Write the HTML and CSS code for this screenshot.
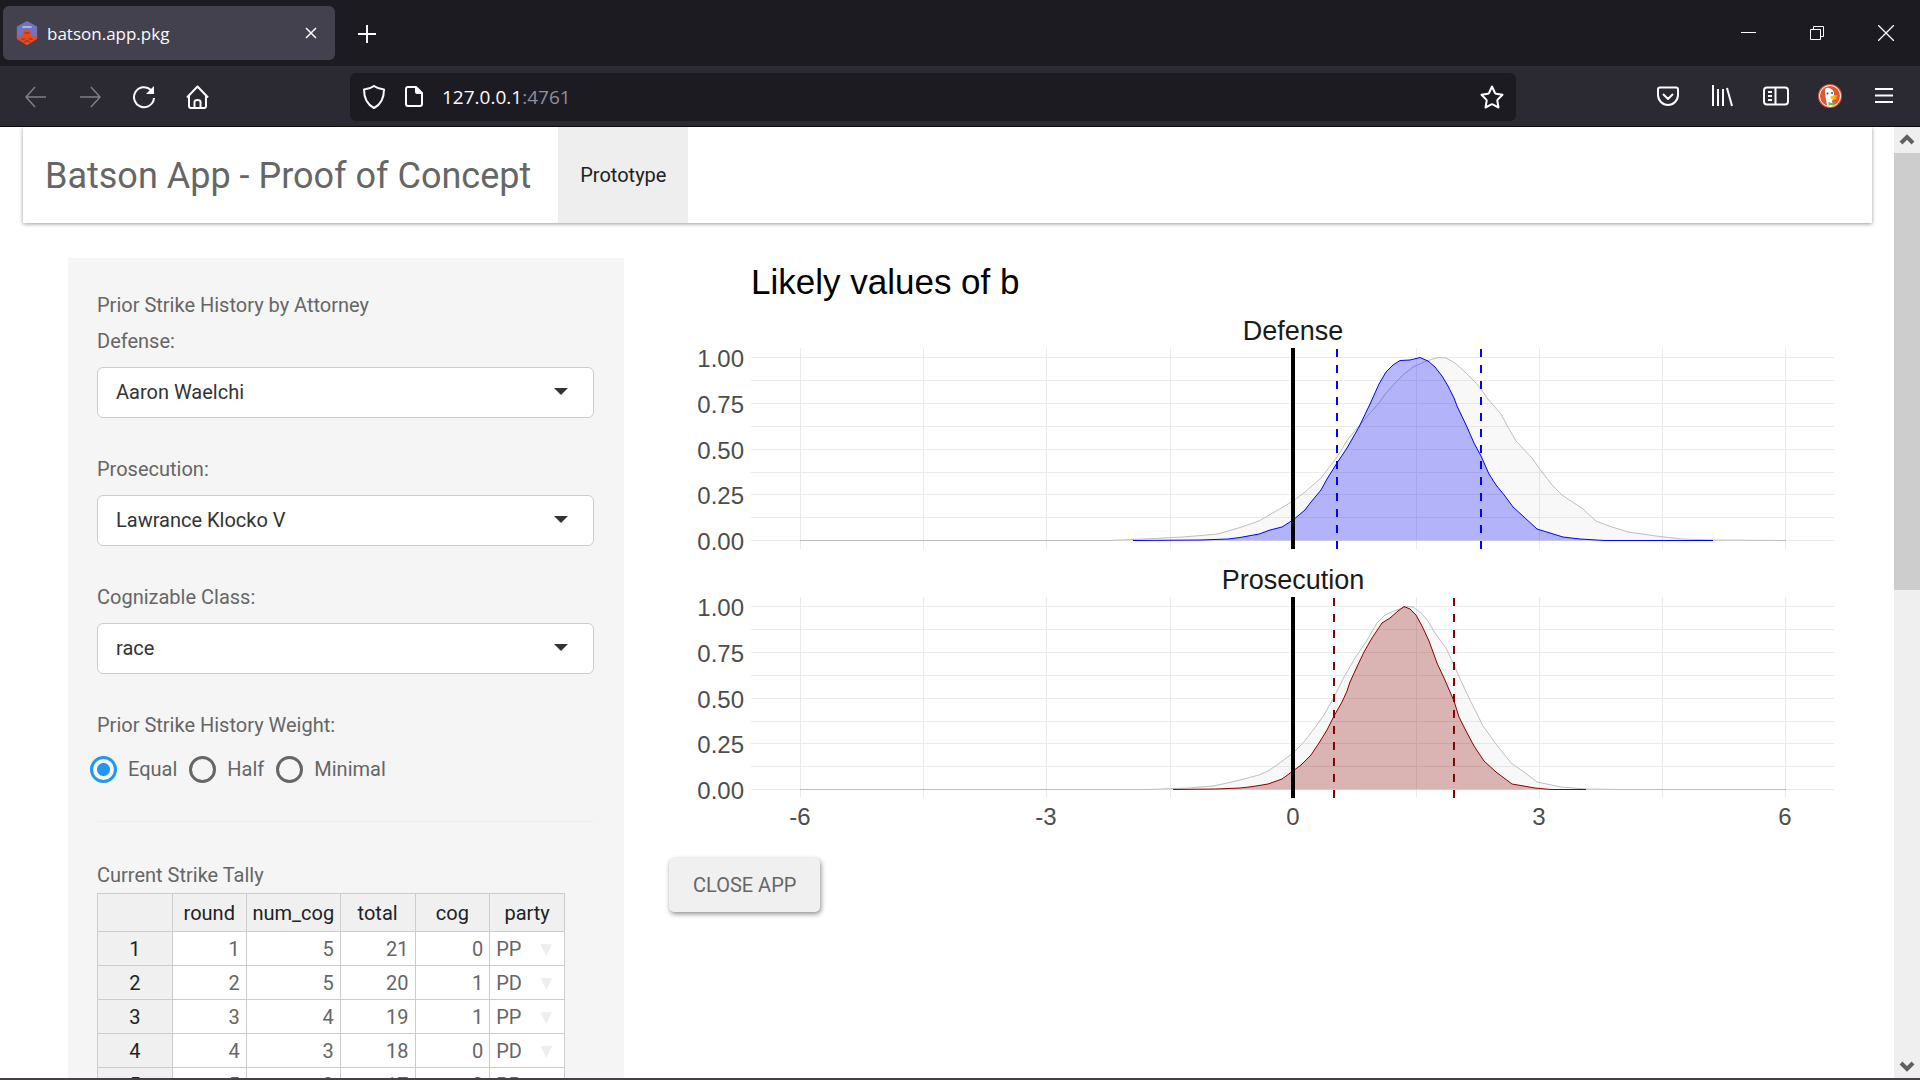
FILE: index.html
```html
<!DOCTYPE html>
<html lang="en">
<head>
<meta charset="utf-8">
<title>batson.app.pkg</title>
<link rel="stylesheet" href="styles.css">
</head>
<body>
<header class="browser">
  <div class="tabstrip">
    <div class="tab">
      <svg class="favicon" viewBox="0 0 24 26" aria-hidden="true">
        <path d="M12 0 23 6v13l-11 7L1 19V6z" fill="#6f74c0"/>
        <path d="M7 6.500h10" stroke="#b4b7e6" stroke-width="2"/>
        <path d="M1 16l4 1 3-1V13Q8 9 12 9t4 4v3l3 1 4-1v3.500L12 26 1 19.500z" fill="#ea4a1c"/>
        <path d="M9.500 13h5M6 20l4-1M14 19l4 1M9 23l3-2 3 2" stroke="#a83a20" fill="none"/>
      </svg>
      <span class="tab-title">batson.app.pkg</span>
      <button class="icon-btn tab-close" aria-label="Close tab">
        <svg width="12" height="12" viewBox="0 0 12 12"><path d="M1 1l10 10M11 1 1 11"/></svg>
      </button>
    </div>
    <button class="icon-btn new-tab" aria-label="New tab">
      <svg width="18" height="18" viewBox="0 0 18 18"><path d="M9 0v18M0 9h18" stroke-width="2"/></svg>
    </button>
    <div class="window-controls">
      <button class="icon-btn" aria-label="Minimize"><svg width="16" height="16" viewBox="0 0 16 16"><path d="M1 7.500h15" stroke-width="1"/></svg></button>
      <button class="icon-btn" aria-label="Restore"><svg width="16" height="16" viewBox="0 0 16 16"><path d="M1.500 4.500h10v10h-10zM4.500 4.500v-3h10v10h-3" stroke-width="1"/></svg></button>
      <button class="icon-btn" aria-label="Close"><svg width="16" height="16" viewBox="0 0 16 16"><path d="M0 0l16 16M16 0 0 16" stroke-width="1.300"/></svg></button>
    </div>
  </div>
  <div class="toolbar">
    <nav class="nav-buttons" aria-label="Browser navigation">
      <button class="icon-btn dim" aria-label="Back"><svg width="24" height="24" viewBox="0 0 24 24"><path d="M22 12H2M11 2 2 12l9 10"/></svg></button>
      <button class="icon-btn dim" aria-label="Forward"><svg width="24" height="24" viewBox="0 0 24 24"><path d="M2 12h20M13 2l9 10-9 10"/></svg></button>
      <button class="icon-btn" aria-label="Reload"><svg width="24" height="24" viewBox="0 0 24 24"><path d="M22 13a10 10 0 1 1-3-8" stroke-width="2"/><path d="M22 1v8h-8z" fill="#fbfbfe" stroke="none"/></svg></button>
      <button class="icon-btn" aria-label="Home"><svg width="24" height="24" viewBox="0 0 24 24"><path d="M1 12.500 11.500 1.500 22 12.500M3 10.500V21q0 2 2 2h13q2 0 2-2V10.500M8.500 23v-6q0-2 3-2t3 2v6" stroke-width="2"/></svg></button>
    </nav>
    <div class="urlbar">
      <svg width="24" height="24" viewBox="0 0 24 24" aria-hidden="true"><path d="M12 1Q16 4 22 4.500 22 18 12 23 2 18 2 4.500 8 4 12 1z" stroke-width="2"/></svg>
      <svg width="20" height="24" viewBox="0 0 20 24" aria-hidden="true"><path d="M12 2H4Q2 2 2 4v15q0 2 2 2h12q2 0 2-2V8z" stroke-width="2"/><path d="M11 1l8 8h-6q-2 0-2-2z" fill="#fbfbfe" stroke="none"/></svg>
      <span class="url">127.0.0.1<span class="port">:4761</span></span>
      <button class="icon-btn star" aria-label="Bookmark this page"><svg width="24" height="24" viewBox="0 0 24 24"><path d="M12 1.500l3 6.500q.3.600 1 .700l6.500 1-4.800 4.900q-.5.500-.4 1.200l1.200 6.700-5.900-3.100q-.6-.300-1.200 0L5.500 22.500l1.200-6.700q.1-.700-.4-1.200L1.500 9.700l6.500-1q.7-.1 1-.700z" stroke-width="2"/></svg></button>
    </div>
    <div class="tool-icons">
      <button class="icon-btn" aria-label="Save to Pocket"><svg width="24" height="24" viewBox="0 0 24 24"><path d="M4 3.500h16q2 0 2 2V11a10 10 0 0 1-20 0V5.500q0-2 2-2zM7 10l5 5 5-5" stroke-width="2"/></svg></button>
      <button class="icon-btn" aria-label="Library"><svg width="24" height="24" viewBox="0 0 24 24"><path d="M3 1v21M8 5v17M13 5v17M17 4l5 18" stroke-width="2"/></svg></button>
      <button class="icon-btn" aria-label="Sidebars"><svg width="26" height="24" viewBox="0 0 26 24"><path d="M4 3.500h18q3 0 3 3v11q0 3-3 3H4q-3 0-3-3v-11q0-3 3-3zM12.500 4v16M5 8h4M5 12h4M5 16h4" stroke-width="2"/></svg></button>
      <button class="icon-btn" aria-label="DuckDuckGo">
        <svg width="24" height="24" viewBox="0 0 24 24"><g stroke="none"><circle cx="12" cy="12" r="12" fill="#de5833"/><circle cx="12" cy="12" r="10.500" fill="none" stroke="#fff" stroke-width="1"/><path d="M7 5q2-2 4-1 4 1 5 5v5l-2 3 1 4.500q-4 1-6 0Q8 15 7 10z" fill="#fff"/><path d="M12.500 12.500q4-2 7.500-.500-2 1-4 1 2 1 3.500.500-2 3-6.500 1.500z" fill="#fdc20a"/><path d="M10.500 18l3 1 3-1v3.500l-3-.500-3 .500z" fill="#65bc46"/><circle cx="9.500" cy="9.500" r="1" fill="#2d4f8e"/><circle cx="14" cy="9" r="1" fill="#2d4f8e"/></g></svg>
      </button>
      <button class="icon-btn" aria-label="Open menu"><svg width="24" height="24" viewBox="0 0 24 24"><path d="M3 5h18M3 11.500h18M3 18h18" stroke-width="2"/></svg></button>
    </div>
  </div>
</header>

<div class="viewport">
  <div class="page">
    <nav class="navbar">
      <span class="brand">Batson App - Proof of Concept</span>
      <a class="nav-tab" href="#prototype">Prototype</a>
    </nav>
    <main class="layout" id="prototype">
      <form class="sidebar">
        <p class="text">Prior Strike History by Attorney</p>
        <div class="field">
          <label for="defense">Defense:</label>
          <div class="select"><select id="defense"><option>Aaron Waelchi</option></select></div>
        </div>
        <div class="field">
          <label for="prosecution">Prosecution:</label>
          <div class="select"><select id="prosecution"><option>Lawrance Klocko V</option></select></div>
        </div>
        <div class="field">
          <label for="class">Cognizable Class:</label>
          <div class="select"><select id="class"><option>race</option></select></div>
        </div>
        <div class="field" role="radiogroup" aria-labelledby="weight-label">
          <p class="text" id="weight-label">Prior Strike History Weight:</p>
          <div class="radios">
            <label><input type="radio" name="weight" checked>Equal</label>
            <label><input type="radio" name="weight">Half</label>
            <label><input type="radio" name="weight">Minimal</label>
          </div>
        </div>
        <hr>
        <p class="text" id="tally-label">Current Strike Tally</p>
        <table class="tally" aria-labelledby="tally-label">
          <colgroup><col><col class="narrow"><col class="wide"><col><col><col></colgroup>
          <thead>
            <tr><th></th><th>round</th><th>num_cog</th><th>total</th><th>cog</th><th>party</th></tr>
          </thead>
          <tbody>
            <tr><th>1</th><td>1</td><td>5</td><td>21</td><td>0</td><td class="party">PP<span class="caret">▼</span></td></tr>
            <tr><th>2</th><td>2</td><td>5</td><td>20</td><td>1</td><td class="party">PD<span class="caret">▼</span></td></tr>
            <tr><th>3</th><td>3</td><td>4</td><td>19</td><td>1</td><td class="party">PP<span class="caret">▼</span></td></tr>
            <tr><th>4</th><td>4</td><td>3</td><td>18</td><td>0</td><td class="party">PD<span class="caret">▼</span></td></tr>
            <tr><th>5</th><td>5</td><td>3</td><td>17</td><td>0</td><td class="party">PP<span class="caret">▼</span></td></tr>
          </tbody>
        </table>
      </form>

      <section class="results">
        <svg class="plot" viewBox="0 0 1173 585" role="img" aria-label="Likely values of b">
          <defs>
            <g id="grid">
              <path d="M82 99.500H1165M82 122.500H1165M82 145.500H1165M82 168.500H1165M82 191.500H1165M82 214.500H1165M82 236.500H1165M82 259.500H1165M82 282.500H1165M131.500 90V291M254.500 90V291M377.500 90V291M501.500 90V291M624.500 90V291M747.500 90V291M870.500 90V291M993.500 90V291M1116.500 90V291"/>
            </g>
          </defs>
          <text class="plot-title" x="82" y="36">Likely values of b</text>

          <g>
            <text class="strip" x="624" y="82">Defense</text>
            <g class="axis-y">
              <text x="75" y="109">1.00</text><text x="75" y="155">0.75</text><text x="75" y="201">0.50</text><text x="75" y="246">0.25</text><text x="75" y="292">0.00</text>
            </g>
            <use href="#grid" class="grid"/>
            <path class="prior" d="M131 282.500H440L464 281.500 495 280 514 279 532 277.500 549 276 559 273 571 269.500 590 263 614 249 624 243 636 234 652 220 668 199 679 181 690 168 701 155 710 145 717 135 727 124 735 116 744 109 755 104 764 101 770 99.500 777 100 786 105 796 114 807 125 812 131 818 140 832 156 840 171 847 183 863 200 870 210 883 227 893 237 914 251 927 263 940 268 959 274 987 278 1013 281 1044 282 1117 282.500"/>
            <path class="defense" d="M464 282.500L531 282 559 281 571 279.500 590 276 601 272 613 269 624 262 636 252 642 244 652 232 658 221 668 205 678 190 690 169 701 146 710 126 717 114 724 107 731 102.500 741 102 751 99.500 759 103 766 109 773 118 779 128 785 140 788 148 798 169 805 185 812 198 820 216 827 227 836 238 844 249 855 259 868 271 881 275 894 279 911 281 936 282.500H1044"/>
            <path class="zero" d="M624 90V291"/>
            <path class="bound defense-bound" d="M668 291V90M812 291V90"/>
          </g>

          <g transform="translate(0 249)">
            <text class="strip" x="624" y="82">Prosecution</text>
            <g class="axis-y">
              <text x="75" y="109">1.00</text><text x="75" y="155">0.75</text><text x="75" y="201">0.50</text><text x="75" y="246">0.25</text><text x="75" y="292">0.00</text>
            </g>
            <use href="#grid" class="grid"/>
            <path class="prior" d="M131 282.500H480L504 281.500 520 281 544 279 549 278 563 275 571 273 590 268 599 264 608 258 624 246 634 236 645 222 655 208 665 190 675 170 686 151 697 135 708 116 716 108 725 104 738 99.500 744 100 752 106 759 114 766 126 777 141 785 158 792 174 801 193 814 219 827 237 842 256 855 265 868 275 892 280 917 282 950 282.500H1117"/>
            <path class="prosecution" d="M504 282.500L547 282 571 281 584 279.500 599 277 613 272 624 264 632 258 642 248 650 236 658 223 665 209 673 195 678 184 681 175 686 164 695 145 703 131 713 116 721 111 729 104 735 99.500 741 102 747 108 753 119 760 134 768 156 775 171 785 194 790 210 796 222 805 239 815 254 827 265 843 277 866 281 882 282.500H917"/>
            <path class="zero" d="M624 90V291"/>
            <path class="bound prosecution-bound" d="M665 291V90M785 291V90"/>
            <g class="axis-x">
              <text x="131" y="318">-6</text><text x="377" y="318">-3</text><text x="624" y="318">0</text><text x="870" y="318">3</text><text x="1116" y="318">6</text>
            </g>
          </g>
        </svg>
        <button class="close-app" type="button">Close app</button>
      </section>
    </main>
  </div>
  <div class="scrollbar" aria-hidden="true">
    <svg viewBox="0 0 26 26"><path d="M7 16l6-6 6 6"/></svg>
    <div class="thumb"></div>
    <svg class="down" viewBox="0 0 26 26"><path d="M7 11l6 6 6-6"/></svg>
  </div>
</div>
</body>
</html>
```
FILE: styles.css
```css
* { box-sizing: border-box; }

body {
  margin: 0;
  height: 100vh;
  display: flex;
  flex-direction: column;
  overflow: hidden;
  border-bottom: 2px solid #444244;
  background: #fff;
  color: #666;
  font: 20px/36px Roboto, sans-serif;
}

p { margin: 0; }
button { font: inherit; border: 0; cursor: pointer; }

/* Browser chrome */
.browser {
  flex: none;
  background: #2b2a33;
  border-bottom: 1px solid #0c0c0d;
  color: #fbfbfe;
  font-family: "Open Sans", "Noto Sans", sans-serif;
}
.browser svg {
  display: block;
  flex: none;
  fill: none;
  stroke: #fbfbfe;
  stroke-width: 1.5;
  stroke-linecap: butt;
  stroke-linejoin: round;
}
.icon-btn {
  display: flex;
  align-items: center;
  justify-content: center;
  padding: 0;
  background: none;
}
.tabstrip {
  display: flex;
  align-items: center;
  height: 66px;
  padding-left: 3px;
  background: #1c1b22;
}
.tab {
  display: flex;
  align-items: center;
  gap: 8px;
  width: 332px;
  height: 54px;
  padding: 0 12px;
  border-radius: 6px;
  background: #42414d;
  font-size: 17px;
}
.browser .favicon { width: 24px; height: 24px; stroke: none; }
.tab-title { flex: 1; padding-top: 2px; }
.tab-close { width: 24px; height: 24px; }
.new-tab { width: 48px; height: 48px; margin-left: 8px; padding-top: 2px; }
.window-controls { display: flex; margin-left: auto; }
.window-controls .icon-btn { width: 69px; height: 66px; }

.toolbar {
  display: flex;
  align-items: center;
  height: 60px;
  padding: 2px 9px 0;
}
.nav-buttons { display: flex; flex: 341 1 0; }
.nav-buttons .icon-btn, .tool-icons .icon-btn { width: 54px; height: 48px; }
.tool-icons .icon-btn { padding-bottom: 2px; }
.dim { opacity: .4; }
.urlbar {
  display: flex;
  align-items: center;
  gap: 18px;
  width: 1166px;
  height: 48px;
  padding: 0 12px;
  border-radius: 6px;
  background: #1c1b22;
  font-size: 19px;
}
.url { flex: 1; }
.port { color: #8f8f9d; }
.tool-icons { display: flex; flex: 395 1 0; justify-content: flex-end; }

/* Page area and its scrollbar */
.viewport {
  flex: 1;
  min-height: 0;
  display: grid;
  grid-template-columns: minmax(0, 1fr) 26px;
}
.page { overflow: hidden; }
.scrollbar {
  display: flex;
  flex-direction: column;
  background: #efefef;
}
.scrollbar svg { width: 26px; height: 26px; fill: none; stroke: #606060; stroke-width: 4; }
.scrollbar .down { margin-top: auto; }
.thumb { height: 46%; background: #cdcdcd; }

/* Navbar */
.navbar {
  display: flex;
  height: 96px;
  margin: 0 22px 0 23px;
  background: #fff;
  box-shadow: 0 1px 4px rgba(0, 0, 0, .4);
}
.brand {
  padding: 0 27px 0 22px;
  font-size: 36px;
  line-height: 98px;
}
.nav-tab {
  padding: 0 22px;
  background: #eee;
  color: #212121;
  line-height: 97px;
  text-decoration: none;
}

.layout {
  display: grid;
  grid-template-columns: minmax(0, 556fr) minmax(0, 1173fr);
  gap: 45px;
  margin: 35px 52px 0 68px;
}

/* Sidebar */
.sidebar {
  padding: 29px 30px 29px 29px;
  background: #f5f5f5;
}
.field { margin-bottom: 33px; }
.field > label { display: block; }
.select { position: relative; margin-top: 8px; }
.select select {
  display: block;
  width: 100%;
  height: 51px;
  padding: 0 18px 2px;
  appearance: none;
  border: 1px solid #ccc;
  border-radius: 6px;
  background: #fff;
  color: #333;
  font: inherit;
}
.select::after {
  content: "";
  position: absolute;
  top: 21px;
  right: 26px;
  border: 7px solid transparent;
  border-top-color: #333;
  border-bottom: 0;
}
.radios {
  display: flex;
  gap: 12px;
  margin: 8px 0 0 -7px;
}
.radios label { display: flex; align-items: center; gap: 11px; }
.radios input {
  width: 27px;
  height: 27px;
  margin: 0;
  appearance: none;
  border: 3px solid #666;
  border-radius: 50%;
}
.radios input:checked {
  border-color: #2196f3;
  background: radial-gradient(circle, #2196f3 6px, transparent 7px);
}
hr {
  height: 1px;
  margin: 34px 0 35px;
  border: 0;
  background: #eee;
}

.tally {
  table-layout: fixed;
  width: 468px;
  border-collapse: collapse;
}
.narrow { width: 74px; }
.wide { width: 94px; }
.tally th, .tally td {
  height: 34px;
  padding: 0 6px;
  border: 1px solid #ccc;
  line-height: 32px;
}
.tally th {
  padding: 0;
  background: #f0f0f0;
  color: #222;
  font-weight: 400;
}
.tally thead th { height: 38px; }
.tally td { background: #fff; text-align: right; }
.tally .party { text-align: left; }
.caret {
  float: right;
  margin-right: 6px;
  color: #eee;
  font-family: "DejaVu Sans", sans-serif;
  font-size: 15px;
}

/* Plot */
.plot {
  display: block;
  width: 100%;
  font-family: "Liberation Sans", Arial, sans-serif;
}
.plot-title { font-size: 35px; fill: #000; }
.strip { font-size: 27px; fill: #1a1a1a; text-anchor: middle; }
.axis-y, .axis-x { font-size: 24px; fill: #4d4d4d; }
.axis-y { text-anchor: end; }
.axis-x { text-anchor: middle; }
.grid { stroke: #ebebeb; stroke-width: 1; }
.prior { stroke: #bebebe; fill: rgba(190, 190, 190, .1); }
.defense { stroke: #00f; fill: rgba(0, 0, 255, .28); }
.prosecution { stroke: #8b0000; fill: rgba(139, 0, 0, .28); }
.zero { stroke: #000; stroke-width: 4; }
.bound { stroke-width: 2; stroke-dasharray: 8 8; }
.defense-bound { stroke: #00f; }
.prosecution-bound { stroke: #8b0000; }

.close-app {
  height: 54px;
  margin-top: 15px;
  padding: 0 24px;
  border-radius: 5px;
  background: #f0f0f0;
  box-shadow: 1px 2px 5px rgba(0, 0, 0, .45);
  color: #666;
  text-transform: uppercase;
}
```
